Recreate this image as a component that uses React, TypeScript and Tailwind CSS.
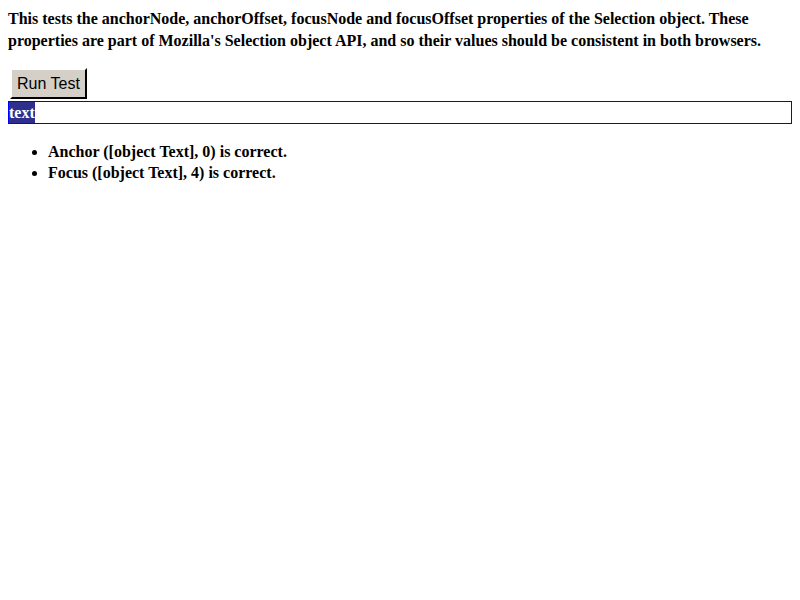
import React from "react";

export default function App() {
  return (
    <div className="min-h-[600px] bg-white p-2 text-black font-['Liberation_Serif',serif] font-bold text-[16px] leading-[22px]">
      <p className="mt-0">
        This tests the anchorNode, anchorOffset, focusNode and focusOffset properties of the Selection object. These
        properties are part of Mozilla's Selection object API, and so their values should be consistent in both browsers.
      </p>
      <div className="mt-[16px] ml-[2px]">
        <button className="h-[31px] px-[5px] bg-[#d4d0c8] border-2 border-t-white border-l-white border-r-black border-b-black font-['Liberation_Sans',sans-serif] font-normal text-[16px] leading-none text-black">
          Run Test
        </button>
      </div>
      <div className="mt-[2px] h-[23px] border border-[#0000ff] leading-[21px]">
        <span className="inline-block h-[21px] bg-[#2e2e8c] text-white">text</span>
      </div>
      <ul className="mt-[17px] pl-[40px] list-disc">
        <li className="leading-[21px]">Anchor ([object Text], 0) is correct.</li>
        <li className="leading-[21px]">Focus ([object Text], 4) is correct.</li>
      </ul>
    </div>
  );
}
